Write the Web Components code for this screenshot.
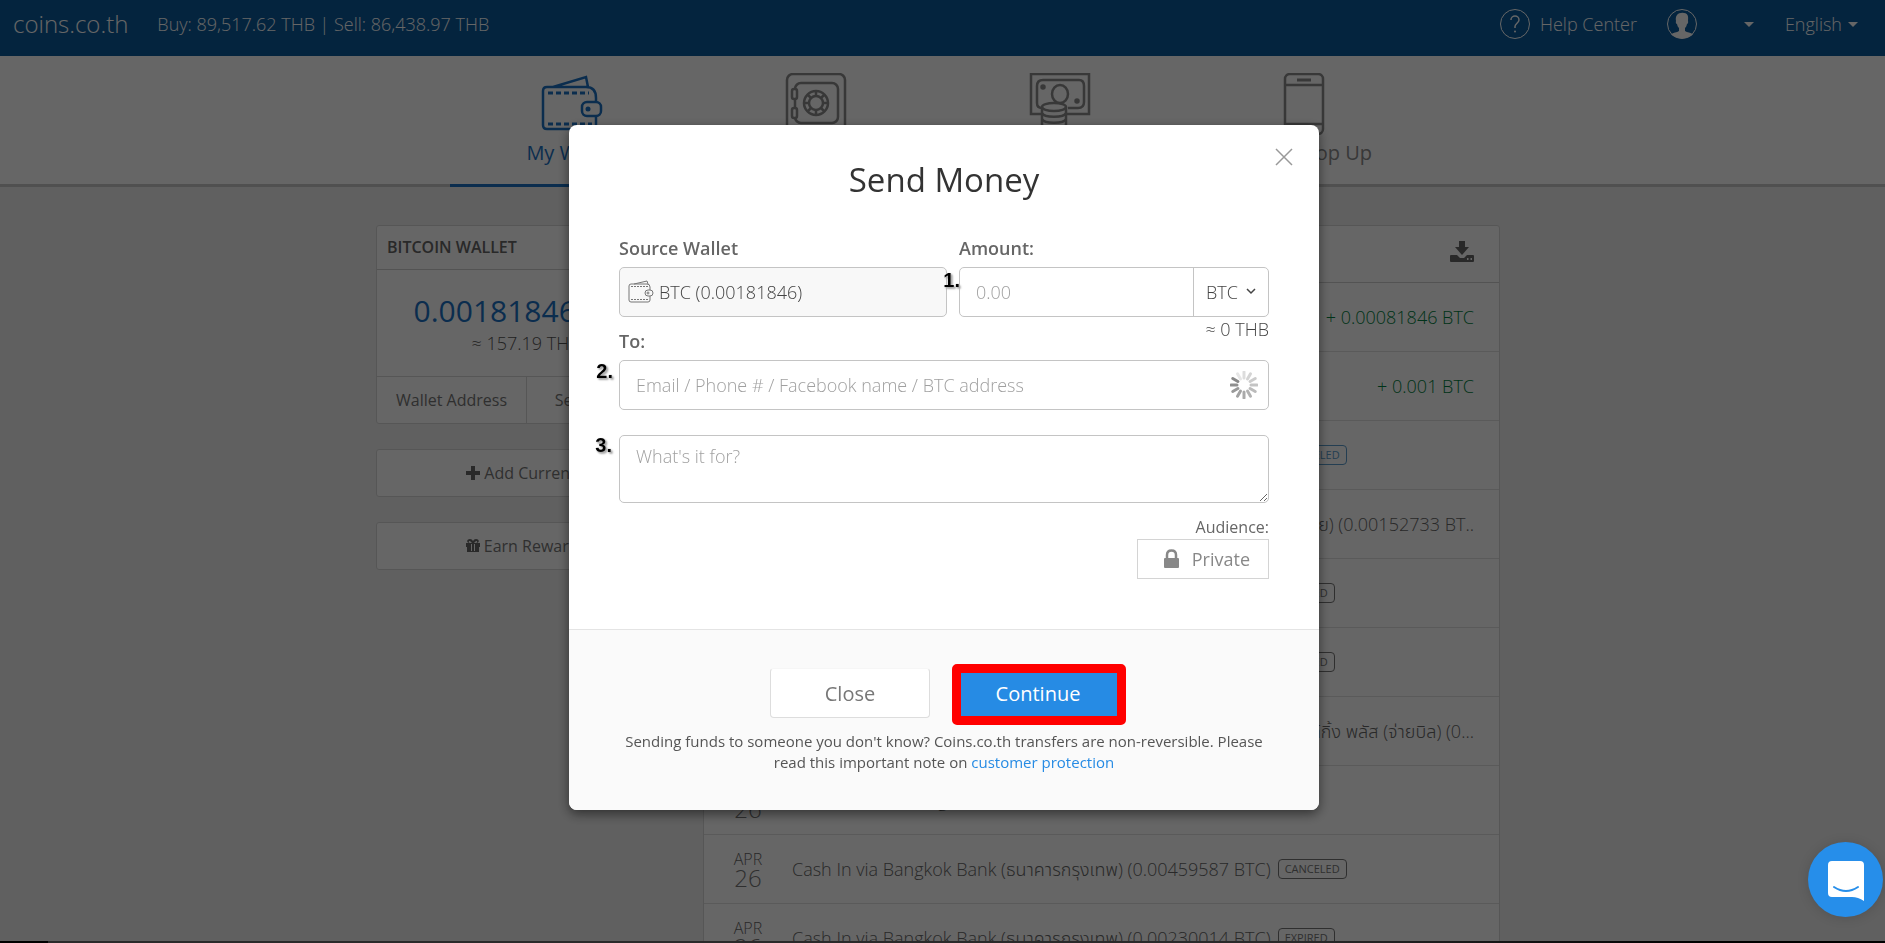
<!DOCTYPE html>
<html lang="en">
<head>
  <meta charset="utf-8">
  <title>coins.co.th</title>
  <style>
    * {
      box-sizing: border-box;
    }
    body {
      margin: 0;
      height: 100vh;
      overflow: hidden;
      background: #f0f0f0;
      color: #444;
      font-family: "Open Sans", "Noto Sans", "Noto Sans Thai", sans-serif;
      font-size: 18px;
      font-weight: 300;
      line-height: 24px;
    }
    .page {
      padding-right: 9px;
    }
    .columns {
      display: grid;
      grid-template-columns: 300px 1fr;
      gap: 27px;
      align-items: start;
      max-width: 1124px;
      margin: 38px auto 0;
    }
  </style>
</head>
<body>
  <top-bar></top-bar>
  <div class="page">
    <main-nav></main-nav>
    <div class="columns">
      <wallet-panel></wallet-panel>
      <history-panel></history-panel>
    </div>
  </div>
  <modal-backdrop>
    <send-money></send-money>
  </modal-backdrop>
  <chat-launcher></chat-launcher>
  <bottom-strip></bottom-strip>

  <script>
    const base = /* html */ `
      <style>
        * {
          box-sizing: border-box;
          margin: 0;
        }
        :host {
          display: block;
        }
        a {
          color: inherit;
          text-decoration: none;
        }
        button, input, select, textarea {
          font: inherit;
          color: inherit;
        }
        svg {
          display: block;
          flex: none;
          fill: none;
          stroke: currentColor;
        }
      </style>
    `;

    class BaseElement extends HTMLElement {
      constructor() {
        super();
        this.attachShadow({ mode: "open" });
      }

      connectedCallback() {
        this.shadowRoot.innerHTML = base + this.render();
      }
    }

    class TopBar extends BaseElement {
      render() {
        return /* html */ `
          <style>
            :host {
              background: #0a5a9c;
              color: #fff;
            }
            header {
              display: flex;
              align-items: center;
              height: 56px;
              padding: 0 27px 8px 13px;
            }
            .logo {
              font-size: 24px;
              margin-right: 29px;
            }
            .rates {
              flex: 1;
            }
            .item {
              display: flex;
              align-items: center;
              gap: 9px;
            }
            .user {
              gap: 46px;
              margin: 0 31px 0 29px;
            }
            .lang {
              gap: 6px;
            }
            .caret {
              border: 5px solid transparent;
              border-top-color: currentColor;
              border-bottom: 0;
            }
          </style>
          <header>
            <a class="logo" href="#">coins.co.th</a>
            <span class="rates">Buy: 89,517.62 THB | Sell: 86,438.97 THB</span>
            <a class="item help" href="#">
              <svg width="32" height="32" viewBox="0 0 32 32">
                <circle cx="16" cy="16" r="14.500"/>
                <path d="M12 12v-.5c0-2 2-3.500 4-3.500s4 1.500 4 4c0 3-4 3.500-4 6.500v1.500" stroke-width="1.500"/>
                <circle cx="16" cy="23.500" r="1" fill="currentColor" stroke="none"/>
              </svg>
              Help Center
            </a>
            <a class="item user" href="#" aria-label="Account">
              <svg width="32" height="32" viewBox="0 0 32 32">
                <circle cx="16" cy="16" r="14.500"/>
                <path d="M11 7c2-3 9-3 10.500 0 1 2 .5 4 .5 6 .5 1-.2 3-1 3-.4 2-1 3-2 4v3c2 1.500 6 1.500 8 3.500-6 5.300-16 5.300-22 0 2-2 6-2 8-3.500v-3c-1-1-1.600-2-2-4-1 0-1.500-2-1-3-.3-2-.5-4 1-6z" fill="currentColor" stroke="none"/>
              </svg>
              <i class="caret"></i>
            </a>
            <a class="item lang" href="#">English <i class="caret"></i></a>
          </header>
        `;
      }
    }

    const navIcons = {
      wallet: `<path d="M11 14 44 4l2 10M44 14H5q-4 0-4 4v34q0 4 4 4h46q3 0 3-3v-11M44 14q10 0 10 11v5"/>
        <path d="M6 20h41M6 51h44" stroke-dasharray="5 3" stroke-width="3"/>
        <rect x="40" y="29" width="19" height="14" rx="5"/>
        <circle cx="46" cy="36" r="2.500" fill="currentColor" stroke="none"/>`,
      safe: `<rect x="1" y="1" width="58" height="60" rx="6"/><rect x="9" y="10" width="43" height="40" rx="6"/>
        <rect x="6" y="16" width="5" height="10" rx="2" fill="#fff"/><rect x="6" y="35" width="5" height="10" rx="2" fill="#fff"/>
        <circle cx="30" cy="30" r="12"/><circle cx="30" cy="30" r="7"/>
        <path d="M30 18v5M30 37v5M18 30h5M37 30h5M21.500 21.500l3.500 3.500M35 35l3.500 3.500M38.500 21.500 35 25M25 35l-3.500 3.500"/>`,
      cash: `<path d="M12 41H1V1h58v40H37"/><path d="M12 35q-5 0-5-5V13q0-6 6-6h36q5 0 5 6v16q0 6-6 6H38"/>
        <ellipse cx="30" cy="21" rx="8" ry="9"/><circle cx="13" cy="14" r="1.500" fill="currentColor"/><circle cx="47" cy="28" r="1.500" fill="currentColor"/>
        <ellipse cx="24" cy="34" rx="12" ry="4" fill="#fff"/>
        <path d="M12 34v28M36 34v28M12 40c2 5 22 5 24 0M12 46c2 5 22 5 24 0M12 52c2 5 22 5 24 0"/>`,
      phone: `<rect x="11" y="1" width="38" height="60" rx="5"/><path d="M11 12h38M11 51h38"/><path d="M23 7h14" stroke-width="3"/>`
    };

    class MainNav extends BaseElement {
      render() {
        const tabs = [
          ["wallet", "My Wallet"],
          ["safe", "Cash In"],
          ["cash", "Cash Out"],
          ["phone", "Mobile Top Up"]
        ];
        return /* html */ `
          <style>
            :host {
              background: #fff;
              border-bottom: 3px solid #c8c8c8;
              margin-right: -9px;
              padding-right: 9px;
            }
            nav {
              display: grid;
              grid-template-columns: repeat(4, 1fr);
              max-width: 976px;
              margin: 0 auto -3px;
            }
            a {
              display: flex;
              flex-direction: column;
              align-items: center;
              gap: 4px;
              height: 131px;
              padding-top: 17px;
              border-bottom: 3px solid transparent;
              color: #8c8c8c;
              font-size: 20px;
              font-weight: 400;
              line-height: 28px;
            }
            a.active {
              color: #1c72c4;
              border-color: #1c72c4;
            }
            svg {
              stroke-width: 2.5;
            }
          </style>
          <nav>
            ${tabs.map(([icon, label], i) => `
              <a href="#" class="${i === 0 ? "active" : ""}">
                <svg width="62" height="62" viewBox="-1 0 62 62">${navIcons[icon]}</svg>
                ${label}
              </a>`).join("")}
          </nav>
        `;
      }
    }

    class WalletPanel extends BaseElement {
      render() {
        return /* html */ `
          <style>
            section, .wide {
              background: #fff;
              border: 1px solid #d8d8d8;
              border-radius: 3px;
            }
            h2 {
              padding: 9px 10px 10px;
              font-size: 16px;
              font-weight: 600;
              line-height: 24px;
              color: #666;
              border-bottom: 1px solid #d0d0d0;
            }
            .balance {
              height: 106px;
              padding: 21px 0;
              text-align: center;
              color: #555;
            }
            .balance strong {
              display: block;
              color: #1c72c4;
              font-size: 30px;
              font-weight: 400;
              line-height: 40px;
            }
            .links {
              display: grid;
              grid-template-columns: 1fr 1fr;
              border-top: 1px solid #d8d8d8;
            }
            .links a {
              padding: 11px 0;
              font-size: 16px;
              font-weight: 400;
              text-align: center;
              color: #777;
            }
            .links a + a {
              border-left: 1px solid #d8d8d8;
            }
            .wide {
              display: flex;
              align-items: center;
              justify-content: center;
              gap: 4px;
              width: 100%;
              height: 48px;
              margin-top: 25px;
              font-size: 16px;
              font-weight: 400;
              color: #777;
            }
            .wide svg {
              fill: #666;
              stroke: none;
            }
          </style>
          <section>
            <h2>BITCOIN WALLET</h2>
            <div class="balance">
              <strong>0.00181846 BTC</strong>
              ≈ 157.19 THB
            </div>
            <div class="links"><a href="#">Wallet Address</a><a href="#">Send Money</a></div>
          </section>
          <button class="wide">
            <svg width="14" height="14" viewBox="0 0 14 14"><path d="M5 0h4v5h5v4H9v5H5V9H0V5h5z"/></svg>
            Add Currency
          </button>
          <button class="wide">
            <svg width="14" height="14" viewBox="0 0 14 14">
              <path fill-rule="evenodd" d="M0 4h3C0 3 1 0 4 0q2 0 3 2 1-2 3-2c3 0 4 3 1 4h3v4h-1v5H1V8H0zM4 2c-2 0-1 2 0 2h2zM10 2 8 4h2c1 0 2-2 0-2zM5 5v7h4V5z"/>
              <path d="M6 5h2v7H6z"/>
            </svg>
            Earn Rewards
          </button>
        `;
      }
    }

    class HistoryRow extends BaseElement {
      render() {
        return /* html */ `
          <style>
            :host {
              display: flex;
              align-items: center;
              height: 69px;
              padding: 0 25px 0 28px;
              border-bottom: 1px solid #e0e0e0;
              color: #666;
              white-space: nowrap;
            }
            time {
              width: 32px;
              margin-right: 28px;
              text-align: center;
              font-size: 16px;
              line-height: 17px;
            }
            time b {
              display: block;
              font-size: 24px;
              font-weight: 300;
              line-height: 20px;
              color: #777;
            }
            .amount {
              flex: 1;
              text-align: right;
              color: #008040;
            }
            ::slotted(.end) {
              flex: 1;
              text-align: right;
            }
          </style>
          <time>APR<b>26</b></time>
          <slot></slot>
          ${this.hasAttribute("amount") ? `<span class="amount">${this.getAttribute("amount")}</span>` : ""}
        `;
      }
    }

    class StatusBadge extends BaseElement {
      render() {
        return /* html */ `
          <style>
            :host {
              padding: 0 6px;
              border: 1px solid currentColor;
              border-radius: 4px;
              font-size: 11px;
              font-weight: 400;
              line-height: 18px;
              color: #777;
            }
            :host([tone="blue"]) {
              color: #5a9ccc;
            }
          </style>
          <slot></slot>
        `;
      }
    }

    class HistoryPanel extends BaseElement {
      render() {
        return /* html */ `
          <style>
            :host {
              background: #fff;
              border: 1px solid #d8d8d8;
              border-radius: 3px;
            }
            header {
              display: flex;
              align-items: center;
              justify-content: flex-end;
              height: 57px;
              padding: 0 25px 4px 0;
              border-bottom: 1px solid #d0d0d0;
            }
            header button {
              padding: 0;
              border: 0;
              background: none;
            }
            header svg {
              fill: #666;
              stroke: none;
            }
            status-badge {
              margin-left: 7px;
            }
          </style>
          <header>
            <button aria-label="Download">
              <svg width="24" height="22" viewBox="0 0 24 22">
                <path fill-rule="evenodd" d="M9 0h6v6h4l-7 8-7-8h4zM1 14h6l3 3h4l3-3h6q1 0 1 1v5q0 1-1 1H1q-1 0-1-1v-5q0-1 1-1zM17 17v2h1.500v-2zM20.500 17v2H22v-2z"/>
              </svg>
            </button>
          </header>
          <history-row amount="+ 0.00081846 BTC">Received</history-row>
          <history-row amount="+ 0.001 BTC">Received</history-row>
          <history-row>Cash In via Bangkok Bank (ธนาคารกรุงเทพ) (0.00152733 BTC)<status-badge tone="blue">CANCELED</status-badge></history-row>
          <history-row><span class="end">(จ่าย) (0.00152733 BT..</span></history-row>
          <history-row>Cash In via Bangkok Bank (ธนาคารกรุงเทพ) (0.00152733 BTC)<status-badge>EXPIRED</status-badge></history-row>
          <history-row>Cash In via Bangkok Bank (ธนาคารกรุงเทพ) (0.00230014 BTC)<status-badge>EXPIRED</status-badge></history-row>
          <history-row><span class="end">แบงก์กิ้ง พลัส (จ่ายบิล) (0...</span></history-row>
          <history-row>Cash In via Banking (ธนาคาร) (0.0045 BTC)<status-badge>EXPIRED</status-badge></history-row>
          <history-row>Cash In via Bangkok Bank (ธนาคารกรุงเทพ) (0.00459587 BTC)<status-badge>CANCELED</status-badge></history-row>
          <history-row>Cash In via Bangkok Bank (ธนาคารกรุงเทพ) (0.00230014 BTC)<status-badge>EXPIRED</status-badge></history-row>
        `;
      }
    }

    class ModalBackdrop extends BaseElement {
      render() {
        return /* html */ `
          <style>
            :host {
              position: fixed;
              inset: 0;
              padding: 125px 0 0 3px;
              background: rgba(0, 0, 0, .6);
            }
          </style>
          <slot></slot>
        `;
      }
    }

    class StepNumber extends BaseElement {
      render() {
        return /* html */ `
          <style>
            :host {
              position: absolute;
              top: -2px;
              right: 100%;
              padding-right: 7px;
              color: #000;
              font: bold 20px/24px "Liberation Sans", sans-serif;
              text-shadow: 0 0 1px #fff, 1px 1px 2px #999, 2px 2px 2px #bbb;
            }
            :host([tight]) {
              top: 0;
              padding-right: 0;
            }
          </style>
          <slot></slot>
        `;
      }
    }

    class SendMoney extends BaseElement {
      render() {
        const ticks = Array.from({ length: 12 }, (_, i) =>
          `<path d="M14 1v6" transform="rotate(${i * 30} 14 14)" opacity="${(0.15 + ((i + 1) % 12) * 0.05).toFixed(2)}"/>`).join("");
        return /* html */ `
          <style>
            :host {
              position: relative;
              max-width: 750px;
              margin: 0 auto;
              border-radius: 8px;
              background: #fff;
              box-shadow: 0 4px 12px rgba(0, 0, 0, .5);
            }
            form {
              display: grid;
              grid-template-columns: 328px minmax(0, 1fr);
              column-gap: 12px;
              padding: 31px 50px 50px;
            }
            h1 {
              grid-column: 1 / -1;
              margin-bottom: 31px;
              color: #333;
              font-size: 33px;
              font-weight: 400;
              line-height: 48px;
              text-align: center;
            }
            .dismiss {
              position: absolute;
              top: 23px;
              right: 26px;
              padding: 0;
              border: 0;
              background: none;
              color: #999;
            }
            label {
              display: block;
              height: 32px;
              padding-top: 1px;
              font-weight: 600;
              color: #666;
            }
            .box {
              position: relative;
              display: flex;
              align-items: center;
              height: 50px;
              border: 1px solid #c4c4c4;
              border-radius: 5px;
              background: #fff;
            }
            .box.source {
              gap: 5px;
              padding-left: 8px;
              background: #f8f8f8;
            }
            .source svg {
              color: #777;
            }
            select {
              appearance: none;
              border: 0;
              outline: 0;
              background: none;
            }
            .source select {
              flex: 1;
            }
            .unit {
              display: flex;
              align-items: center;
              gap: 8px;
              align-self: stretch;
              padding: 0 12px;
              border-left: 1px solid #c4c4c4;
            }
            .unit select {
              padding: 0;
            }
            input {
              flex: 1;
              min-width: 0;
              padding: 0 16px;
              border: 0;
              outline: 0;
              background: none;
            }
            ::placeholder {
              color: #a0a0a0;
              opacity: 1;
            }
            .rate {
              height: 24px;
              text-align: right;
            }
            .full {
              grid-column: 1 / -1;
            }
            .to {
              margin-top: -13px;
            }
            .to .box {
              padding-right: 10px;
            }
            .spinner {
              color: #555;
              stroke-width: 3;
              stroke-linecap: round;
            }
            .note {
              position: relative;
              display: flex;
              margin-top: 25px;
            }
            textarea {
              width: 100%;
              height: 68px;
              padding: 8px 16px;
              border: 1px solid #c4c4c4;
              border-radius: 5px;
              resize: vertical;
            }
            .audience {
              display: flex;
              flex-direction: column;
              align-items: flex-end;
              padding-top: 12px;
              font-size: 16px;
              font-weight: 400;
              color: #666;
            }
            .audience button {
              display: flex;
              align-items: center;
              gap: 12px;
              height: 40px;
              padding: 0 18px 0 25px;
              border: 1px solid #d4d4d4;
              background: #fff;
              color: #888;
              font-size: 18px;
            }
            footer {
              padding: 38px 50px 37px;
              border-top: 1px solid #e4e4e4;
              border-radius: 0 0 8px 8px;
              background: #fafafa;
              font-size: 15px;
              font-weight: 400;
              line-height: 21px;
              text-align: center;
              color: #555;
            }
            .actions {
              display: flex;
              justify-content: center;
              gap: 28px;
              margin-bottom: 13px;
            }
            .actions button {
              width: 160px;
              height: 50px;
              border: 1px solid #ddd;
              border-top-color: #f6f6f6;
              border-radius: 4px;
              background: #fff;
              color: #777;
              font-size: 20px;
            }
            .actions .go {
              border: 0;
              background: #268be4;
              color: #fff;
            }
            .marked {
              position: relative;
            }
            .marked::after {
              content: "";
              position: absolute;
              inset: -4px -8px -7px -6px;
              border: 9px solid #f00;
              border-radius: 5px;
            }
            footer a {
              color: #268be4;
            }
          </style>
          <button class="dismiss" aria-label="Dismiss">
            <svg width="18" height="18" viewBox="0 0 18 18"><path d="m1 1 16 16M17 1 1 17" stroke-width="1.500"/></svg>
          </button>
          <form>
            <h1>Send Money</h1>
            <div>
              <label for="source">Source Wallet</label>
              <div class="box source">
                <svg width="26" height="24" viewBox="0 0 26 24">
                  <path d="M6 4 19 1l1 3M22 10V7q0-3-3-3H3Q1 4 1 6v14q0 2 2 2h17q2 0 2-2v-4"/>
                  <path d="M3 6.500h18M3 19.500h18" stroke-dasharray="2 1"/>
                  <rect x="17" y="10" width="8" height="6" rx="3"/><circle cx="20" cy="13" r="1"/>
                </svg>
                <select id="source"><option>BTC (0.00181846)</option></select>
              </div>
            </div>
            <div>
              <label for="amount">Amount:</label>
              <div class="box">
                <step-number tight>1.</step-number>
                <input id="amount" placeholder="0.00">
                <div class="unit">
                  <select aria-label="Currency"><option>BTC</option></select>
                  <svg width="10" height="8" viewBox="0 0 10 8"><path d="m1 1 4 4 4-4" stroke-width="1.500"/></svg>
                </div>
              </div>
              <div class="rate">≈ 0 THB</div>
            </div>
            <div class="full to">
              <label for="to">To:</label>
              <div class="box">
                <step-number>2.</step-number>
                <input id="to" placeholder="Email / Phone # / Facebook name / BTC address">
                <svg class="spinner" width="28" height="28" viewBox="0 0 28 28">${ticks}</svg>
              </div>
            </div>
            <div class="full note">
              <step-number>3.</step-number>
              <textarea aria-label="Note" placeholder="What's it for?"></textarea>
            </div>
            <div class="full audience">
              <span>Audience:</span>
              <button type="button">
                <svg width="17" height="20" viewBox="0 0 17 20">
                  <path d="M4 9V6q0-4.500 4.500-4.500T13 6v3" stroke-width="2.500"/>
                  <rect x="1" y="9" width="15" height="10" rx="1" fill="currentColor" stroke="none"/>
                </svg>
                Private
              </button>
            </div>
          </form>
          <footer>
            <div class="actions">
              <button>Close</button>
              <span class="marked"><button class="go">Continue</button></span>
            </div>
            <p>Sending funds to someone you don't know? Coins.co.th transfers are non-reversible. Please read this important note on <a href="#">customer protection</a></p>
          </footer>
        `;
      }
    }

    class ChatLauncher extends BaseElement {
      render() {
        return /* html */ `
          <style>
            :host {
              position: fixed;
              right: 2px;
              bottom: 26px;
            }
            button {
              display: grid;
              place-items: center;
              width: 75px;
              height: 75px;
              padding: 2px 0 0;
              border: 0;
              border-radius: 50%;
              background: #268eea;
              box-shadow: 0 1px 12px rgba(0, 0, 0, .15);
            }
          </style>
          <button aria-label="Chat">
            <svg width="36" height="40" viewBox="0 0 36 40">
              <path d="M4 0h28q4 0 4 4v36q-6-4-12-4H4q-4 0-4-4V4q0-4 4-4z" fill="#fff" stroke="none"/>
              <path d="M6 26q12 8 24 0" stroke="#268eea" stroke-width="2" stroke-linecap="round"/>
            </svg>
          </button>
        `;
      }
    }

    class BottomStrip extends BaseElement {
      render() {
        return /* html */ `
          <style>
            :host {
              position: fixed;
              inset: auto 0 0;
              height: 2px;
              background: linear-gradient(90deg, #000 48px, #2a2a2a 48px 1300px, #000 1700px);
            }
          </style>
        `;
      }
    }

    customElements.define("top-bar", TopBar);
    customElements.define("main-nav", MainNav);
    customElements.define("wallet-panel", WalletPanel);
    customElements.define("history-row", HistoryRow);
    customElements.define("status-badge", StatusBadge);
    customElements.define("history-panel", HistoryPanel);
    customElements.define("modal-backdrop", ModalBackdrop);
    customElements.define("step-number", StepNumber);
    customElements.define("send-money", SendMoney);
    customElements.define("chat-launcher", ChatLauncher);
    customElements.define("bottom-strip", BottomStrip);
  </script>
</body>
</html>
